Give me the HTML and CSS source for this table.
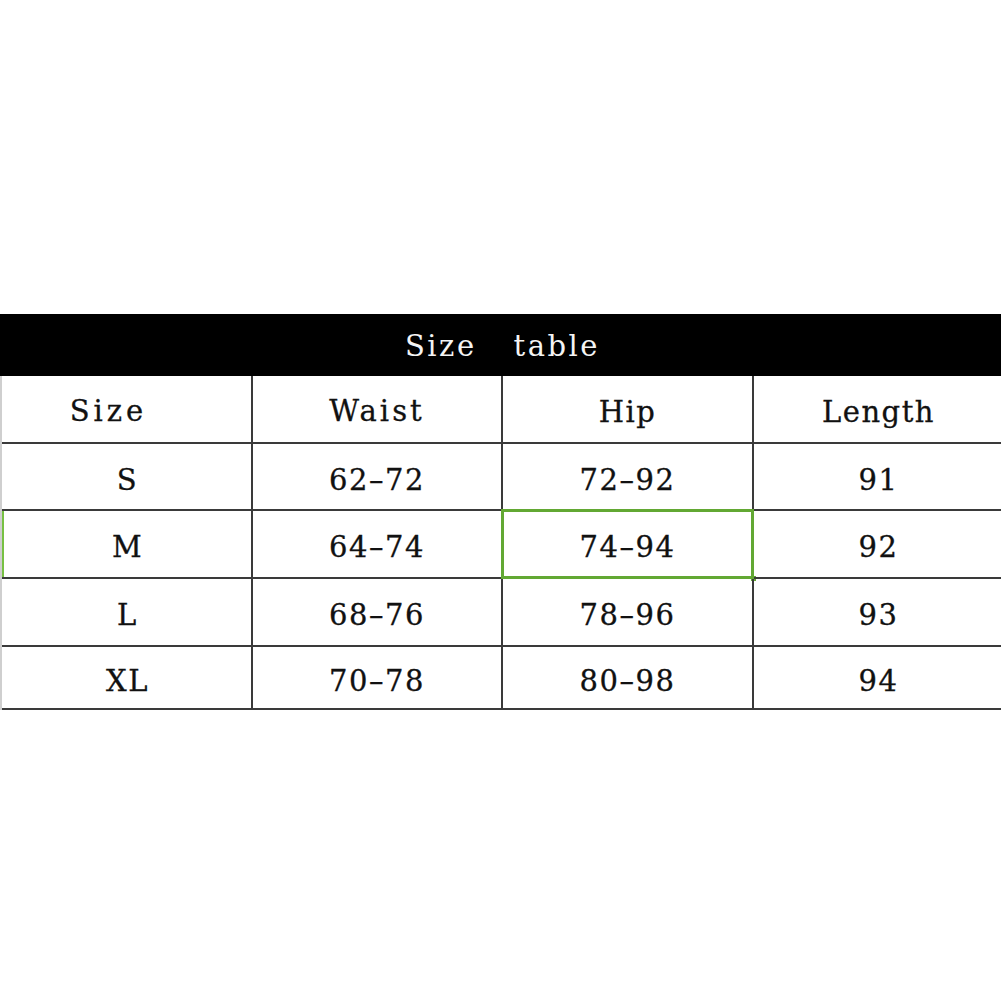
FILE: index.html
```html
<!DOCTYPE html>
<html>
<head>
<meta charset="utf-8">
<link rel="stylesheet" href="styles.css">
</head>
<body>
<div class="page">
  <div class="title"><span>Size</span><span>table</span></div>
  <div class="table">
    <div class="cell first head-size">Size</div>
    <div class="cell wide">Waist</div>
    <div class="cell">Hip</div>
    <div class="cell last">Length</div>

    <div class="cell first">S</div>
    <div class="cell">62–72</div>
    <div class="cell">72–92</div>
    <div class="cell last">91</div>

    <div class="cell first mark">M</div>
    <div class="cell">64–74</div>
    <div class="cell selected">74–94<span class="sel-box"></span><span class="handle"></span></div>
    <div class="cell last">92</div>

    <div class="cell first">L</div>
    <div class="cell">68–76</div>
    <div class="cell">78–96</div>
    <div class="cell last">93</div>

    <div class="cell first">XL</div>
    <div class="cell">70–78</div>
    <div class="cell">80–98</div>
    <div class="cell last">94</div>
  </div>
</div>
</body>
</html>
```
FILE: styles.css
```css
html, body {
  margin: 0;
  padding: 0;
  background: #ffffff;
}
.page {
  width: 1001px;
  height: 1001px;
  padding-top: 314px;
  box-sizing: border-box;
  font-family: "DejaVu Serif", serif;
  overflow: hidden;
}
.title {
  height: 62px;
  background: #000000;
  color: #f4f4f4;
  display: flex;
  align-items: center;
  justify-content: center;
  gap: 37px;
  font-size: 29px;
  letter-spacing: 2.5px;
  padding-left: 4px;
  padding-top: 2px;
  box-sizing: border-box;
}
.table {
  display: grid;
  grid-template-columns: 251px 250px 251px 249px;
  grid-template-rows: 68px 67px 68px 68px 63px;
  border-left: 2px solid #cfcfcf;
}
.cell {
  position: relative;
  display: flex;
  align-items: center;
  justify-content: center;
  border-right: 2px solid #3a3a3a;
  border-bottom: 2px solid #3a3a3a;
  font-size: 29px;
  letter-spacing: 1.5px;
  color: #111111;
  -webkit-text-stroke: 0.3px #111111;
  padding-top: 6px;
  box-sizing: border-box;
}
.cell.first {
  padding-left: 2px;
}
.cell.head-size {
  letter-spacing: 4px;
  padding-right: 38px;
  padding-top: 4px;
}
.cell.wide {
  letter-spacing: 3px;
  padding-top: 4px;
}
.cell.last {
  border-right: none;
}
.cell.mark {
  box-shadow: inset 2px 0 0 #77c043;
}
.sel-box {
  position: absolute;
  left: -2px;
  top: -2px;
  right: -2px;
  bottom: -2px;
  border: 3px solid #62a833;
}
.handle {
  position: absolute;
  right: -4px;
  bottom: -4px;
  width: 5px;
  height: 5px;
  background: #62a833;
}
```
